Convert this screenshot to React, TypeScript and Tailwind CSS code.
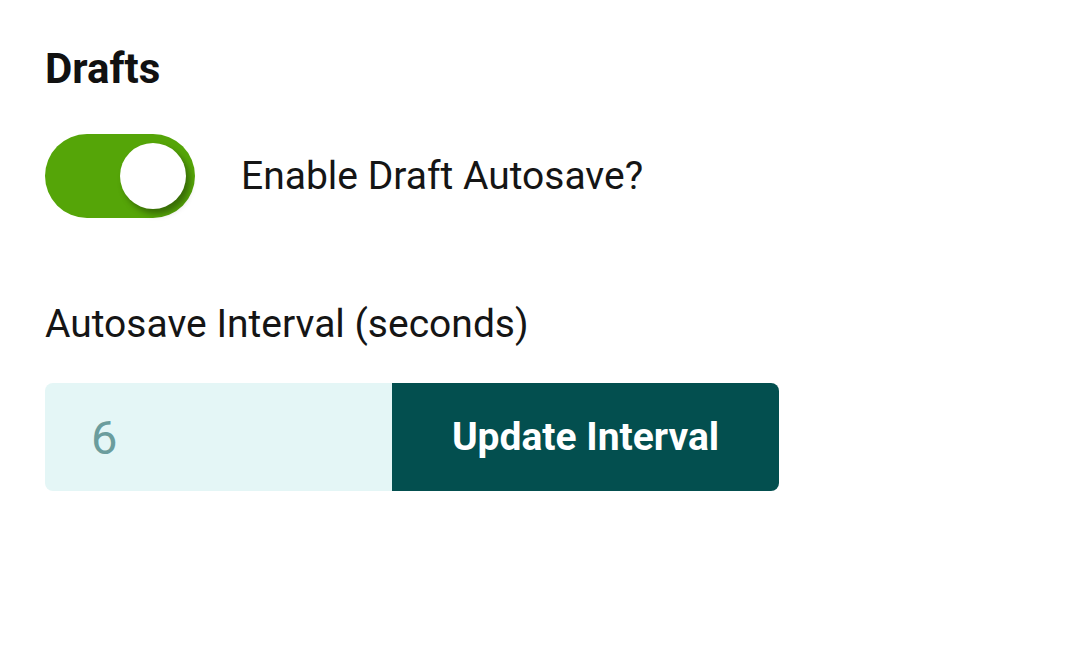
import React from "react";

export default function App() {
  return (
    <div className="min-h-[655px] w-[1080px] bg-white pl-[45px] pt-[44px]" style={{ fontFamily: "Roboto, 'Noto Sans', sans-serif" }}>
      <h2 className="text-[42px] font-bold leading-[50px] text-[#111111]">Drafts</h2>
      <div className="mt-[40px] flex items-center gap-[46px]">
        <div className="relative flex h-[84px] w-[150px] items-center justify-end rounded-full bg-[#55a508] pr-[9px]">
          <div className="h-[66px] w-[66px] rounded-full bg-white shadow-[4px_5px_6px_rgba(0,0,0,0.35)]" />
        </div>
        <span className="text-[39px] leading-[47px] text-[#151515]">Enable Draft Autosave?</span>
      </div>
      <div className="mt-[83px] text-[39px] leading-[47px] text-[#151515]">Autosave Interval (seconds)</div>
      <div className="mt-[35px] flex h-[108px] w-[734px] overflow-hidden rounded-[8px]">
        <div className="flex w-[347px] items-center bg-[#e4f6f6] pl-[46px] text-[47px] leading-none text-[#6b9d9d]">6</div>
        <button className="flex flex-1 items-center justify-center bg-[#034f4f] text-[39px] font-bold text-white">Update Interval</button>
      </div>
    </div>
  );
}
